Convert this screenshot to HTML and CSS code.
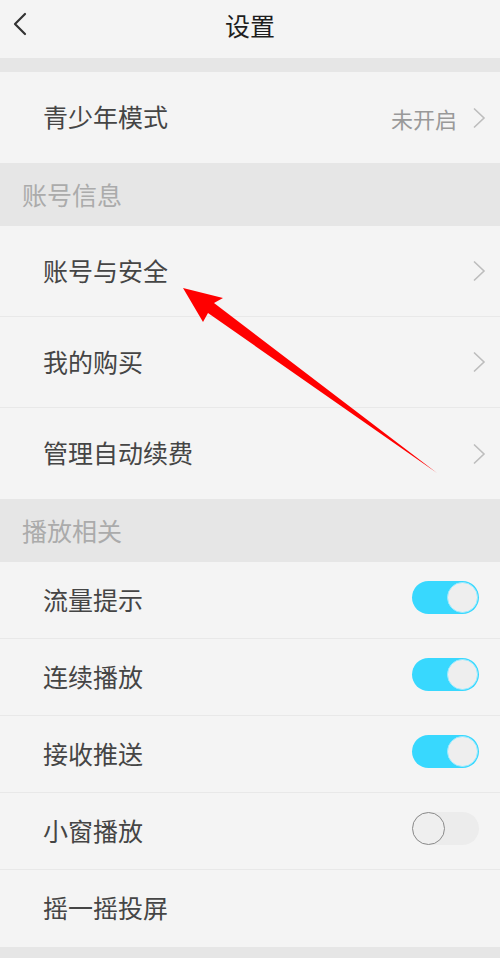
FILE: index.html
```html
<!DOCTYPE html>
<html lang="zh-CN">
<head>
<meta charset="utf-8">
<title>设置</title>
<link rel="stylesheet" href="styles.css">
</head>
<body>
<div class="page">
  <header class="topbar">
    <svg class="back" width="16" height="24" viewBox="0 0 16 24"><path d="M13 2 L3 12 L13 22" fill="none" stroke="#333" stroke-width="2.2" stroke-linecap="round" stroke-linejoin="round"/></svg>
    <h1 class="title">设置</h1>
  </header>
  <div class="gap"></div>
  <div class="row tall">
    <span class="label">青少年模式</span>
    <span class="value">未开启</span>
    <svg class="chev" width="14" height="22" viewBox="0 0 14 22"><path d="M2 1.5 L12 11 L2 20.5" fill="none" stroke="#bdbdbd" stroke-width="1.6"/></svg>
  </div>
  <div class="section">账号信息</div>
  <div class="row tall line">
    <span class="label">账号与安全</span>
    <svg class="chev" width="14" height="22" viewBox="0 0 14 22"><path d="M2 1.5 L12 11 L2 20.5" fill="none" stroke="#bdbdbd" stroke-width="1.6"/></svg>
  </div>
  <div class="row tall line">
    <span class="label">我的购买</span>
    <svg class="chev" width="14" height="22" viewBox="0 0 14 22"><path d="M2 1.5 L12 11 L2 20.5" fill="none" stroke="#bdbdbd" stroke-width="1.6"/></svg>
  </div>
  <div class="row tall">
    <span class="label">管理自动续费</span>
    <svg class="chev" width="14" height="22" viewBox="0 0 14 22"><path d="M2 1.5 L12 11 L2 20.5" fill="none" stroke="#bdbdbd" stroke-width="1.6"/></svg>
  </div>
  <div class="section">播放相关</div>
  <div class="row short line">
    <span class="label">流量提示</span>
    <span class="toggle on"><span class="knob"></span></span>
  </div>
  <div class="row short line">
    <span class="label">连续播放</span>
    <span class="toggle on"><span class="knob"></span></span>
  </div>
  <div class="row short line">
    <span class="label">接收推送</span>
    <span class="toggle on"><span class="knob"></span></span>
  </div>
  <div class="row short line">
    <span class="label">小窗播放</span>
    <span class="toggle off"><span class="knob"></span></span>
  </div>
  <div class="row short">
    <span class="label">摇一摇投屏</span>
  </div>
  <div class="bottom"></div>
  <svg class="arrow" width="500" height="958" viewBox="0 0 500 958">
    <polygon points="183,288 223,298 214,303 437,473 208,313 203,322" fill="#ff0000"/>
  </svg>
</div>
</body>
</html>
```
FILE: styles.css
```css
html, body {
  margin: 0;
  padding: 0;
  background: #f4f4f4;
}
.page {
  position: relative;
  width: 500px;
  height: 958px;
  overflow: hidden;
  font-family: "Noto Sans CJK SC", "Noto Sans", sans-serif;
  background: #f4f4f4;
}
.topbar {
  position: relative;
  height: 58px;
  box-sizing: border-box;
  padding-bottom: 8px;
  display: flex;
  align-items: center;
  justify-content: center;
}
.back {
  position: absolute;
  left: 12px;
  top: 12px;
}
.title {
  margin: 0;
  font-size: 25px;
  font-weight: 400;
  color: #1e1e1e;
  line-height: 1;
}
.gap {
  height: 14px;
  background: #e6e6e6;
}
.row {
  display: flex;
  align-items: center;
  padding: 0 14px 0 43px;
  box-sizing: border-box;
  background: #f4f4f4;
}
.row.tall { height: 91px; }
.row.short { height: 77px; }
.row.line { border-bottom: 1px solid #e8e8e8; }
.label {
  flex: 1;
  font-size: 25px;
  color: #454545;
  line-height: 1;
  padding-bottom: 2px;
}
.value {
  font-size: 22px;
  color: #999;
  margin-right: 15px;
  line-height: 1;
}
.chev {
  display: block;
}
.section {
  height: 63px;
  background: #e6e6e6;
  display: flex;
  align-items: center;
  padding-left: 22px;
  font-size: 25px;
  color: #ababab;
  line-height: 1;
  box-sizing: border-box;
}
.toggle {
  width: 67px;
  height: 33px;
  border-radius: 17px;
  box-sizing: border-box;
  display: flex;
  align-items: center;
  margin-right: 7px;
  margin-bottom: 6px;
}
.toggle.on {
  background: #38d8fe;
  justify-content: flex-end;
  padding: 0 1px;
}
.toggle.off {
  background: #ececec;
  justify-content: flex-start;
}
.knob {
  width: 31px;
  height: 31px;
  border-radius: 50%;
  background: #eeeeee;
  box-sizing: border-box;
}
.toggle.on .knob {
  border: 1px solid #9beaff;
}
.toggle.off .knob {
  width: 33px;
  height: 33px;
  border: 1.5px solid #8a8a8a;
  background: #efefef;
}
.bottom {
  height: 12px;
  background: #e6e6e6;
}
.arrow {
  position: absolute;
  left: 0;
  top: 0;
  pointer-events: none;
}
```
